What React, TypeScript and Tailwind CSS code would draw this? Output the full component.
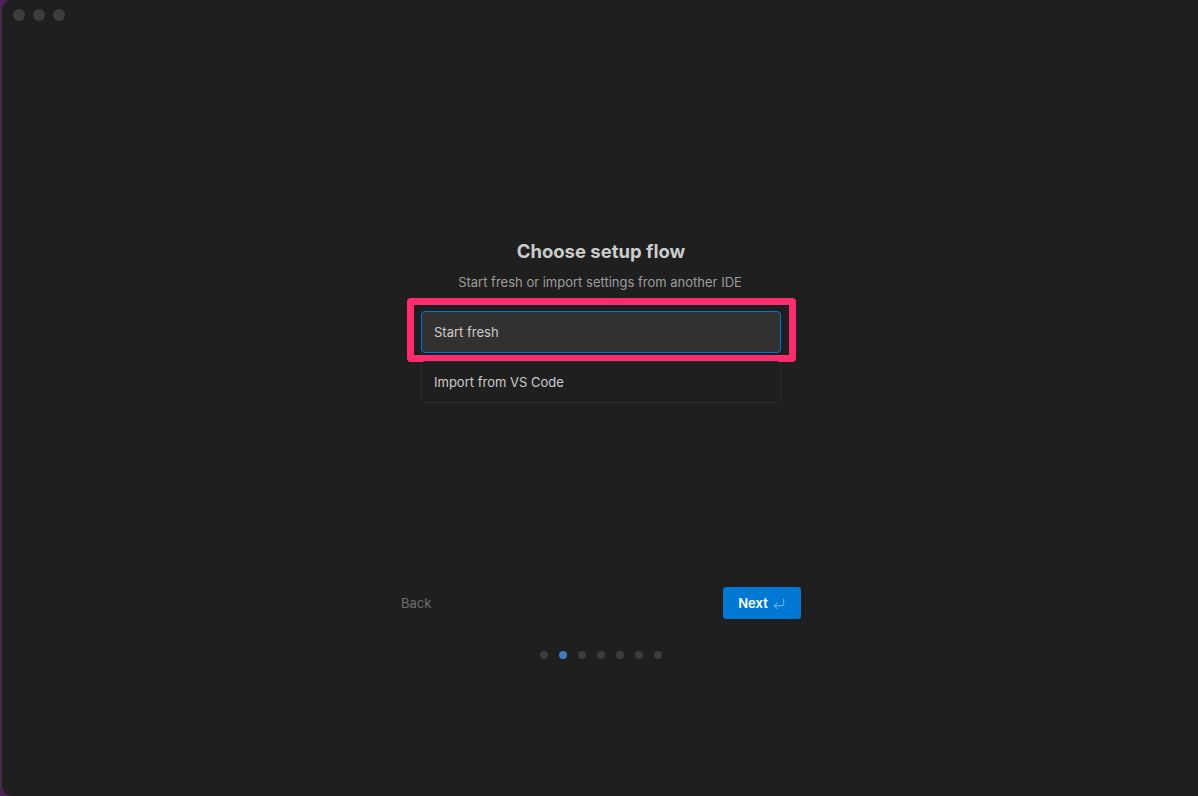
import React from 'react'
import { CornerDownLeft } from 'lucide-react'

const options = ['Start fresh', 'Import from VS Code']

export default function App() {
  return (
    <div className="h-[796px] w-[1198px] overflow-hidden bg-[#4a1f5a]" style={{ fontFamily: 'Inter, "Noto Sans", sans-serif' }}>
      <div className="ml-px h-full rounded-l-[10px] border-l border-[#3a3a3a] bg-[#1f1f1f] flex flex-col">
        <div className="h-[30px] flex items-center gap-2 pl-[11px] shrink-0">
          <span className="w-3 h-3 rounded-full bg-[#3d3d3d]" />
          <span className="w-3 h-3 rounded-full bg-[#3d3d3d]" />
          <span className="w-3 h-3 rounded-full bg-[#3d3d3d]" />
        </div>

        <div className="flex flex-col items-center pt-[209px]">
          <h1 className="text-[18.5px] leading-[24px] font-bold text-[#cccccc] translate-x-px">Choose setup flow</h1>
          <p className="mt-[10px] text-[13px] leading-[18px] text-[#9d9d9d]">Start fresh or import settings from another IDE</p>

          <div className="mt-[20px] w-[360px] flex flex-col gap-2 translate-x-px">
            {options.map((label, i) => (
              <div key={label} className="relative">
                <div
                  className={
                    i === 0
                      ? 'h-[42px] flex items-center pt-[2px] px-3 rounded-[4px] border border-[#0078d4] bg-[#313131] text-[13px] text-[#cccccc]'
                      : 'h-[42px] flex items-center pt-[2px] px-3 rounded-[4px] border border-[#2b2b2b] text-[13px] text-[#cccccc]'
                  }
                >
                  {label}
                </div>
                {i === 0 && (
                  <div className="absolute left-[-14px] top-[-13px] right-[-15px] bottom-[-9px] border-[7px] border-[#fe2c6e] rounded-[4px] pointer-events-none" />
                )}
              </div>
            ))}
          </div>

          <div className="mt-[184px] w-[400px] flex items-center justify-between translate-x-px">
            <button className="text-[13px] text-[#6e6e6e] pt-[2px]">Back</button>
            <button className="h-8 w-[78px] pt-[2px] rounded-[3px] bg-[#0078d4] text-white text-[13px] font-semibold flex items-center justify-center gap-1">
              Next
              <CornerDownLeft size={14} strokeWidth={1.6} className="text-[#8fbff0]" />
            </button>
          </div>

          <div className="mt-[32px] flex items-center gap-[11px] translate-x-px">
            {[0, 1, 2, 3, 4, 5, 6].map((d) => (
              <span key={d} className={d === 1 ? 'w-2 h-2 rounded-full bg-[#3f7bc0]' : 'w-2 h-2 rounded-full bg-[#3c3c3c]'} />
            ))}
          </div>
        </div>
      </div>
    </div>
  )
}
